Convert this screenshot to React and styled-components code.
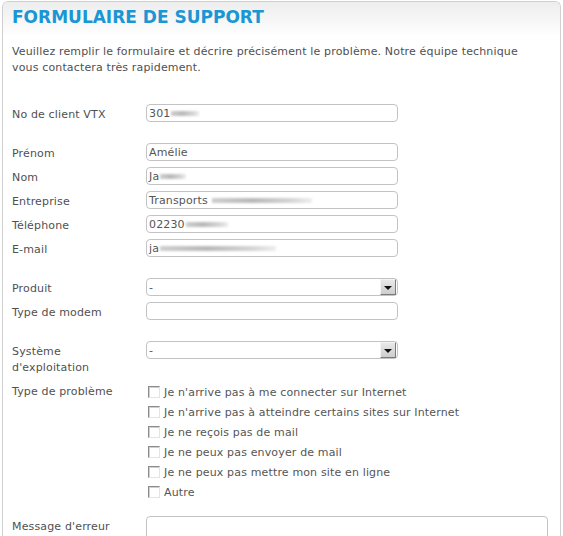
import React from 'react'
import styled, { createGlobalStyle } from 'styled-components'

const GlobalStyle = createGlobalStyle`
	body {
		margin: 0;
		background: #fff;
		font-family: 'DejaVu Sans', Verdana, sans-serif;
		font-size: 11px;
		letter-spacing: 0.15px;
		color: #505050;
	}
`

const Panel = styled.div`
	margin: 1px 2px 0 2px;
	min-height: 535px;
	border: 1px solid #cfcfcf;
	border-bottom: none;
	border-radius: 6px 6px 0 0;
	box-sizing: border-box;
`

const Header = styled.div`
	padding: 5px 9px 0;
	height: 34px;
	box-sizing: border-box;
	border-radius: 5px 5px 0 0;
	background: linear-gradient(#ededed, #fbfbfb 80%, #fff);
`

const Title = styled.h1`
	margin: 0;
	font-size: 17px;
	line-height: 20px;
	font-weight: bold;
	letter-spacing: 0;
	color: #1b96d4;
`

const Intro = styled.p`
	margin: 8px 9px 27px;
	line-height: 16px;
`

const Form = styled.div`
	padding: 0 9px;
`

const Group = styled.div`
	margin-bottom: ${(p) => p.$gap ?? 15}px;
`

const Row = styled.div`
	display: flex;
	align-items: flex-start;
	min-height: 24px;
`

const Label = styled.div`
	width: 134px;
	flex: none;
	line-height: 16px;
	padding: 4px 0 ${(p) => (p.$tall ? 4 : 0)}px;
`

const Box = styled.div`
	margin-top: 1px;
	width: ${(p) => p.$w || 252}px;
	height: ${(p) => p.$h || 18}px;
	box-sizing: border-box;
	border: 1px solid #c3c3c3;
	border-radius: 4px;
	background: #fff;
	padding: 0 2px;
	display: flex;
	align-items: ${(p) => (p.$h ? 'flex-start' : 'center')};
	color: #555;
	white-space: nowrap;
`

const Smudge = styled.span`
	display: inline-block;
	width: ${(p) => p.$w}px;
	height: 5px;
	margin-left: ${(p) => p.$ml || 1}px;
	background: linear-gradient(90deg, #cfcfcf, #b9b9b9 40%, #d6d6d6 80%, #eee);
	filter: blur(1.2px);
`

const Value = styled.span`
	flex: 1;
`

const ArrowButton = styled.span`
	width: 16px;
	height: 16px;
	flex: none;
	margin-right: -1px;
	box-sizing: border-box;
	border: 1px solid;
	border-color: #f4f4f4 #7a7a7a #7a7a7a #f4f4f4;
	background: linear-gradient(#e9e9e9, #cdcdcd);
	display: flex;
	align-items: center;
	justify-content: center;

	&::after {
		content: '';
		border-left: 4px solid transparent;
		border-right: 4px solid transparent;
		border-top: 4px solid #111;
		margin-top: 2px;
	}
`

const Checks = styled.div`
	padding-top: 2px;
`

const CheckItem = styled.label`
	display: flex;
	align-items: center;
	height: 20px;
	gap: 4px;
	padding-left: 2px;
	color: #555;
`

const CheckBox = styled.span`
	width: 12px;
	height: 12px;
	box-sizing: border-box;
	border: 1px solid;
	border-color: #8a8a8a #e4e4e4 #e4e4e4 #8a8a8a;
	background: #fff;
	box-shadow: inset 1px 1px 0 #d0d0d0;
`

const Field = ({ text, smudge, ml }) => (
	<Box>
		{text}
		{smudge && <Smudge $w={smudge} $ml={ml} />}
	</Box>
)

const Select = () => (
	<Box>
		<Value>-</Value>
		<ArrowButton />
	</Box>
)

const problems = [
	"Je n'arrive pas à me connecter sur Internet",
	"Je n'arrive pas à atteindre certains sites sur Internet",
	'Je ne reçois pas de mail',
	'Je ne peux pas envoyer de mail',
	'Je ne peux pas mettre mon site en ligne',
	'Autre',
]

export default function App() {
	return (
		<>
			<GlobalStyle />
			<Panel>
				<Header>
					<Title>FORMULAIRE DE SUPPORT</Title>
				</Header>
				<Intro>
					Veuillez remplir le formulaire et décrire précisément le problème. Notre équipe technique
					<br />
					vous contactera très rapidement.
				</Intro>
				<Form>
					<Group>
						<Row>
							<Label>No de client VTX</Label>
							<Field text="301" smudge={28} />
						</Row>
					</Group>
					<Group>
						<Row>
							<Label>Prénom</Label>
							<Field text="Amélie" />
						</Row>
						<Row>
							<Label>Nom</Label>
							<Field text="Ja" smudge={26} ml={0} />
						</Row>
						<Row>
							<Label>Entreprise</Label>
							<Field text="Transports" smudge={100} ml={4} />
						</Row>
						<Row>
							<Label>Téléphone</Label>
							<Field text="02230" smudge={42} ml={0} />
						</Row>
						<Row>
							<Label>E-mail</Label>
							<Field text="ja" smudge={116} ml={0} />
						</Row>
					</Group>
					<Group>
						<Row>
							<Label>Produit</Label>
							<Select />
						</Row>
						<Row>
							<Label>Type de modem</Label>
							<Field />
						</Row>
					</Group>
					<Group $gap={0}>
						<Row>
							<Label $tall>
								Système
								<br />
								d'exploitation
							</Label>
							<Select />
						</Row>
					</Group>
					<Group $gap={13}>
						<Row>
							<Label>Type de problème</Label>
							<Checks>
								{problems.map((p) => (
									<CheckItem key={p}>
										<CheckBox />
										{p}
									</CheckItem>
								))}
							</Checks>
						</Row>
					</Group>
					<Row>
						<Label>Message d'erreur</Label>
						<Box $w={402} $h={40} />
					</Row>
				</Form>
			</Panel>
		</>
	)
}
